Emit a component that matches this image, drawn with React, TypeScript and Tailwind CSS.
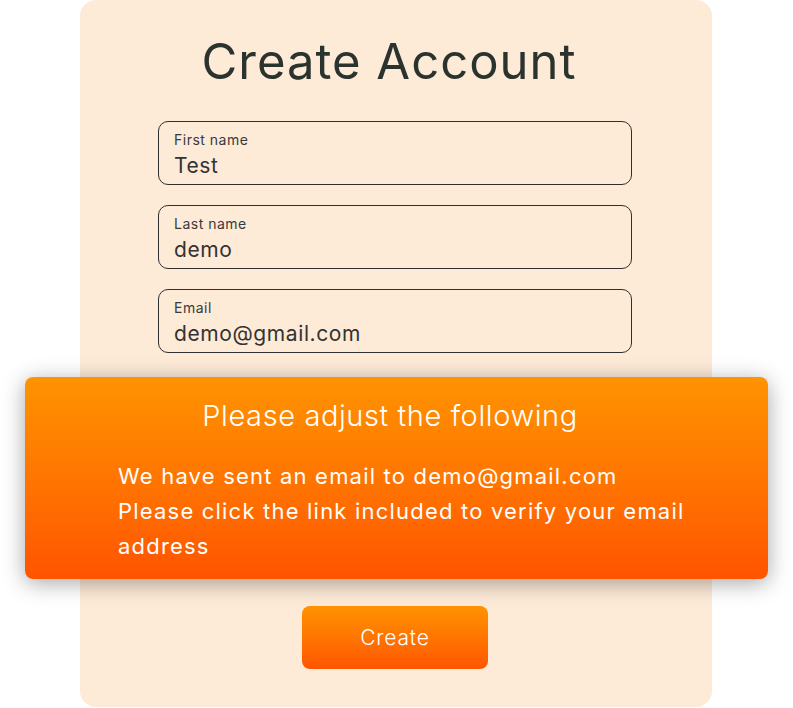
import React from "react";

function Field({ label, value }: { label: string; value: string }) {
  return (
    <div className="w-[474px] h-[64px] rounded-[10px] border border-[#2f2f2f] pl-[15px] pt-[9px] flex flex-col">
      <span className="text-[14px] leading-[18px] tracking-[0.5px] text-[#3a3a3a]">{label}</span>
      <span className="mt-[2px] text-[21px] leading-[30px] tracking-[0.6px] text-[#333333]">{value}</span>
    </div>
  );
}

export default function App() {
  return (
    <div
      className="relative w-[793px] h-[708px] bg-white overflow-hidden"
      style={{ fontFamily: "Inter, 'Noto Sans', sans-serif" }}
    >
      <div className="ml-[80px] w-[632px] h-[707px] rounded-[16px] bg-[#fdead7] flex flex-col items-center">
        <h1 className="mt-[32px] mr-[14px] text-[49px] leading-[60px] font-normal text-[#2b332e] tracking-[1px]">
          Create Account
        </h1>
        <div className="mt-[29px] ml-[-2px] flex flex-col gap-[20px]">
          <Field label="First name" value="Test" />
          <Field label="Last name" value="demo" />
          <Field label="Email" value="demo@gmail.com" />
        </div>
        <div className="h-[253px]" />
        <button className="w-[186px] h-[63px] ml-[-2px] rounded-[8px] bg-gradient-to-b from-[#ff9200] to-[#ff5400] text-white text-[21px] tracking-[0.8px] font-light">
          Create
        </button>
      </div>

      <div className="absolute left-[25px] top-[377px] w-[743px] h-[202px] rounded-[8px] bg-gradient-to-b from-[#ff9300] to-[#ff5300] shadow-[0_4px_22px_rgba(0,0,0,0.35)] text-white">
        <div className="pt-[20px] pr-[13px] text-center text-[29px] leading-[38px] tracking-[0.6px] font-light">
          Please adjust the following
        </div>
        <div className="mt-[24px] pl-[93px] pr-[80px] text-[22px] leading-[35px] tracking-[1.2px] font-normal">
          <div>We have sent an email to demo@gmail.com</div>
          <div>Please click the link included to verify your email address</div>
        </div>
      </div>
    </div>
  );
}
